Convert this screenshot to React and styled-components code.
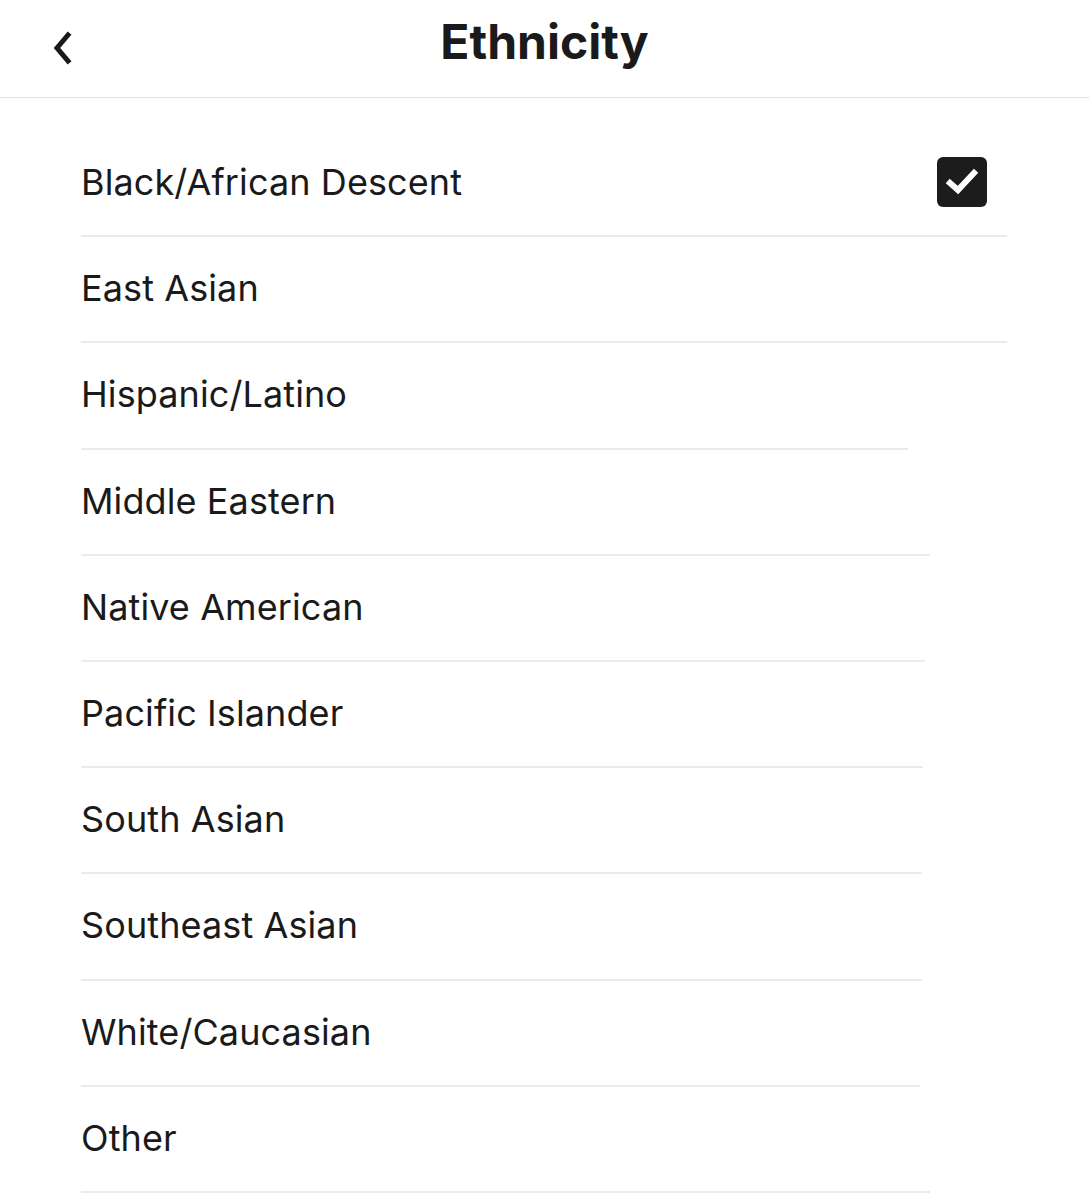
import React from 'react';
import styled, { createGlobalStyle } from 'styled-components';

const GlobalStyle = createGlobalStyle`
  html, body {
    margin: 0;
    padding: 0;
    background: #ffffff;
  }
  body {
    font-family: Inter, "Liberation Sans", sans-serif;
    color: #1a1a1a;
  }
`;

const options = [
  { label: 'Black/African Descent', checked: true, lineEnd: 1007 },
  { label: 'East Asian', lineEnd: 1007 },
  { label: 'Hispanic/Latino', lineEnd: 908 },
  { label: 'Middle Eastern', lineEnd: 930 },
  { label: 'Native American', lineEnd: 925 },
  { label: 'Pacific Islander', lineEnd: 923 },
  { label: 'South Asian', lineEnd: 922 },
  { label: 'Southeast Asian', lineEnd: 922 },
  { label: 'White/Caucasian', lineEnd: 920 },
  { label: 'Other', lineEnd: 930 },
];

const Page = styled.div`
  width: 1089px;
  min-height: 1200px;
  background: #ffffff;
`;

const Header = styled.header`
  height: 97px;
  border-bottom: 1px solid #e2e2e2;
  display: grid;
  grid-template-columns: 120px 1fr 120px;
  align-items: center;
`;

const BackButton = styled.button`
  border: 0;
  background: none;
  padding: 0 0 2px 49px;
  height: 100%;
  display: flex;
  align-items: center;
  cursor: pointer;
  color: #1a1a1a;
`;

const Title = styled.h1`
  margin: 0;
  text-align: center;
  font-size: 48px;
  font-weight: 700;
  letter-spacing: 0;
  color: #1a1a1a;
  padding-bottom: 14px;
`;

const List = styled.ul`
  list-style: none;
  margin: 0;
  padding: 33px 0 0 81px;
  width: 926px;
`;

const Row = styled.li`
  height: 106.2px;
  box-sizing: border-box;
  display: flex;
  align-items: center;
  justify-content: space-between;
  padding: 0 20px 4px 0;
  position: relative;
  font-size: 36px;
  font-weight: 400;
  letter-spacing: 0.1px;
  color: #1a1a1a;
`;

const Divider = styled.span`
  position: absolute;
  left: 0;
  bottom: 0;
  height: 2px;
  background: #ebebeb;
`;

const Label = styled.span``;

const Check = styled.span`
  width: 50px;
  height: 50px;
  border-radius: 6px;
  background: #1c1c1c;
  display: flex;
  align-items: center;
  justify-content: center;
`;

export default function App() {
  return (
    <Page>
      <GlobalStyle />
      <Header>
        <BackButton aria-label="Back">
          <svg width="26" height="34" viewBox="0 0 26 34">
            <path d="M19 4 L8 17 L19 30" fill="none" stroke="#1a1a1a" strokeWidth="5" strokeLinecap="square" />
          </svg>
        </BackButton>
        <Title>Ethnicity</Title>
        <div />
      </Header>
      <List>
        {options.map((o) => (
          <Row key={o.label}>
            <Label>{o.label}</Label>
            {o.checked && (
              <Check>
                <svg width="38" height="38" viewBox="0 0 38 38">
                  <path d="M7 20 L15 27 L31 10" fill="none" stroke="#ffffff" strokeWidth="6" strokeLinecap="square" strokeLinejoin="miter" />
                </svg>
              </Check>
            )}
            <Divider style={{ width: o.lineEnd - 81 }} />
          </Row>
        ))}
      </List>
    </Page>
  );
}
